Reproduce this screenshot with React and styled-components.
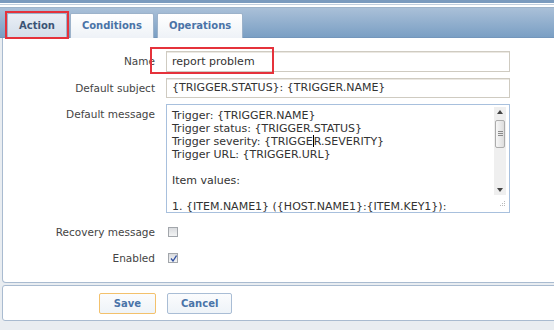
import React from "react";
import styled, { createGlobalStyle } from "styled-components";

const GlobalStyle = createGlobalStyle`
  html, body {
    margin: 0;
    padding: 0;
    background: #e9edf1;
    overflow: hidden;
  }
  body {
    font-family: "DejaVu Sans", Verdana, sans-serif;
  }
`;

const Page = styled.div`
  position: relative;
  width: 560px;
  height: 330px;
  display: flex;
  flex-direction: column;
`;

const TopBand = styled.div`
  height: 3px;
  background: #7b9bbe;
`;

const HeaderGap = styled.div`
  height: 5px;
  background: linear-gradient(
    #ffffff 0 1px,
    #c3d0de 1px 2px,
    #ffffff 2px 4px,
    #9fb4ca 4px 5px
  );
`;

const TabBar = styled.div`
  height: 30px;
  box-sizing: border-box;
  display: flex;
  align-items: flex-end;
  gap: 3px;
  padding-left: 7px;
  background: linear-gradient(#aac0d8, #7a9fc4);
  border-bottom: 1px solid #7396bb;
`;

const Tab = styled.div`
  height: 25px;
  box-sizing: border-box;
  padding: 0 11px;
  margin-bottom: -1px;
  border: 1px solid #9cb2ca;
  border-bottom: none;
  border-radius: 2px 2px 0 0;
  font-size: 10px;
  font-weight: bold;
  line-height: 24px;
  color: ${(p) => (p.$active ? "#3b5475" : "#4a73a7")};
  background: ${(p) =>
    p.$active
      ? "linear-gradient(#e9eef5, #d3deea)"
      : "linear-gradient(#ffffff, #eef2f7)"};
`;

const Panel = styled.div`
  margin-left: 2px;
  padding: 13px 0 14px;
  background: #fff;
  border: 1px solid #a9bbd0;
  border-top: none;
  border-radius: 0 0 4px 4px;
`;

const FormGrid = styled.div`
  display: grid;
  grid-template-columns: 152px 344px;
  column-gap: 11px;
  row-gap: 6px;
`;

const Label = styled.div`
  text-align: right;
  font-size: 10.5px;
  line-height: ${(p) => p.$lh || 21}px;
  color: #444;
  margin-top: ${(p) => p.$mt || 0}px;
`;

const Input = styled.div`
  height: ${(p) => p.$h || 21}px;
  box-sizing: border-box;
  padding: 0 5px;
  border: 1px solid #cfcbc1;
  box-shadow: inset 0 1px 0 #ebe8e2;
  background: #fff;
  font-size: 11px;
  line-height: ${(p) => (p.$h || 21) - 2}px;
  color: #333;
  white-space: nowrap;
`;

const TextBox = styled.div`
  height: 109px;
  box-sizing: border-box;
  display: flex;
  border: 1px solid #a8c0dd;
  background: #fff;
`;

const TextLines = styled.div`
  flex: 1;
  padding: 4px 0 0 5px;
  overflow: hidden;
  font-size: 11px;
  line-height: 13px;
  color: #333;
`;

const Line = styled.div`
  height: 13px;
  white-space: pre;
`;

const Caret = styled.span`
  display: inline-block;
  width: 1px;
  height: 12px;
  vertical-align: -2px;
  background: #000;
`;

const ScrollCol = styled.div`
  width: 12px;
  margin: 2px 3px 0 0;
  display: flex;
  flex-direction: column;
`;

const Track = styled.div`
  height: 88px;
  display: flex;
  flex-direction: column;
  align-items: center;
  background: #efefef;
`;

const Arrow = styled.div`
  height: 10px;
  display: flex;
  align-items: center;
  justify-content: center;
`;

const Thumb = styled.div`
  width: 10px;
  height: 28px;
  box-sizing: border-box;
  margin-top: 3px;
  border: 1px solid #acacac;
  border-radius: 2px;
  background: linear-gradient(to right, #f7f7f7, #dddddd);
  display: flex;
  align-items: center;
  justify-content: center;
`;

const Spacer = styled.div`
  flex: 1;
`;

const Grip = styled.div`
  display: flex;
  justify-content: flex-end;
  margin-top: 5px;
`;

const CheckCell = styled.div`
  height: 20px;
  display: flex;
  align-items: center;
  padding-left: 2px;
  margin-top: ${(p) => p.$mt || 0}px;
`;

const Check = styled.div`
  width: 10px;
  height: 10px;
  box-sizing: border-box;
  border: 1px solid #a2a6ab;
  background: linear-gradient(#d9dbde, #f3f4f5);
  display: flex;
  align-items: center;
  justify-content: center;
`;

const ButtonBar = styled.div`
  margin: 2px 0 0 2px;
  height: 36px;
  box-sizing: border-box;
  padding-top: 7px;
  background: #fff;
  border: 1px solid #a9bbd0;
  border-radius: 3px;
  display: grid;
  grid-template-columns: 153px auto;
  column-gap: 11px;
  align-items: start;
`;

const Button = styled.div`
  justify-self: ${(p) => (p.$end ? "end" : "start")};
  height: 21px;
  box-sizing: border-box;
  padding: 0 ${(p) => p.$px || 14}px;
  border: 1px solid ${(p) => (p.$primary ? "#f3c16c" : "#a9bdd5")};
  border-radius: 2px;
  background: linear-gradient(#fbfcfd, #eef3f8);
  font-size: 10px;
  font-weight: bold;
  line-height: 19px;
  color: #4a74a8;
`;

const Footer = styled.div`
  flex: 1;
  background: #e9edf1;
`;

const Highlight = styled.div`
  position: absolute;
  box-sizing: border-box;
  border: 2px solid #e5323b;
`;

function UpArrow({ down }) {
  return (
    <svg width="6" height="4" viewBox="0 0 6 4">
      <path d={down ? "M0 0H6L3 4Z" : "M0 4H6L3 0Z"} fill="#444" />
    </svg>
  );
}

const messageLines = [
  "Trigger: {TRIGGER.NAME}",
  "Trigger status: {TRIGGER.STATUS}",
  null,
  "Trigger URL: {TRIGGER.URL}",
  "",
  "Item values:",
  "",
  "1. {ITEM.NAME1} ({HOST.NAME1}:{ITEM.KEY1}):",
];

export default function App() {
  return (
    <>
      <GlobalStyle />
      <Page>
        <TopBand />
        <HeaderGap />
        <TabBar>
          <Tab $active>Action</Tab>
          <Tab>Conditions</Tab>
          <Tab>Operations</Tab>
        </TabBar>
        <Panel>
          <FormGrid>
            <Label>Name</Label>
            <Input>report problem</Input>

            <Label $lh={20}>Default subject</Label>
            <Input $h={20}>{"{TRIGGER.STATUS}: {TRIGGER.NAME}"}</Input>

            <Label>Default message</Label>
            <TextBox>
              <TextLines>
                {messageLines.map((text, i) =>
                  text === null ? (
                    <Line key={i}>
                      {"Trigger severity: {TRIGGE"}
                      <Caret />
                      {"R.SEVERITY}"}
                    </Line>
                  ) : (
                    <Line key={i}>{text}</Line>
                  )
                )}
              </TextLines>
              <ScrollCol>
                <Track>
                  <Arrow>
                    <UpArrow />
                  </Arrow>
                  <Thumb>
                    <svg width="5" height="6" viewBox="0 0 5 6">
                      <path d="M0 .5H5M0 2.5H5M0 4.5H5" stroke="#8a8a8a" strokeWidth="1" />
                    </svg>
                  </Thumb>
                  <Spacer />
                  <Arrow>
                    <UpArrow down />
                  </Arrow>
                </Track>
                <Grip>
                  <svg width="7" height="7" viewBox="0 0 7 7">
                    <g fill="#b9b9b9">
                      <rect x="5" y="1" width="1" height="1" />
                      <rect x="3" y="3" width="1" height="1" />
                      <rect x="5" y="3" width="1" height="1" />
                      <rect x="1" y="5" width="1" height="1" />
                      <rect x="3" y="5" width="1" height="1" />
                      <rect x="5" y="5" width="1" height="1" />
                    </g>
                  </svg>
                </Grip>
              </ScrollCol>
            </TextBox>

            <Label $lh={20} $mt={3}>Recovery message</Label>
            <CheckCell $mt={3}>
              <Check />
            </CheckCell>

            <Label $lh={20}>Enabled</Label>
            <CheckCell>
              <Check>
                <svg width="7" height="7" viewBox="0 0 7 7">
                  <path d="M1 3.5L3 6L6.5 0.5" fill="none" stroke="#2f4fa0" strokeWidth="1.3" />
                </svg>
              </Check>
            </CheckCell>
          </FormGrid>
        </Panel>
        <ButtonBar>
          <Button $end $primary $px={14}>Save</Button>
          <Button $px={13}>Cancel</Button>
        </ButtonBar>
        <Footer />
        <Highlight style={{ left: 5, top: 11, width: 64, height: 28 }} />
        <Highlight style={{ left: 150, top: 47, width: 124, height: 27 }} />
      </Page>
    </>
  );
}
